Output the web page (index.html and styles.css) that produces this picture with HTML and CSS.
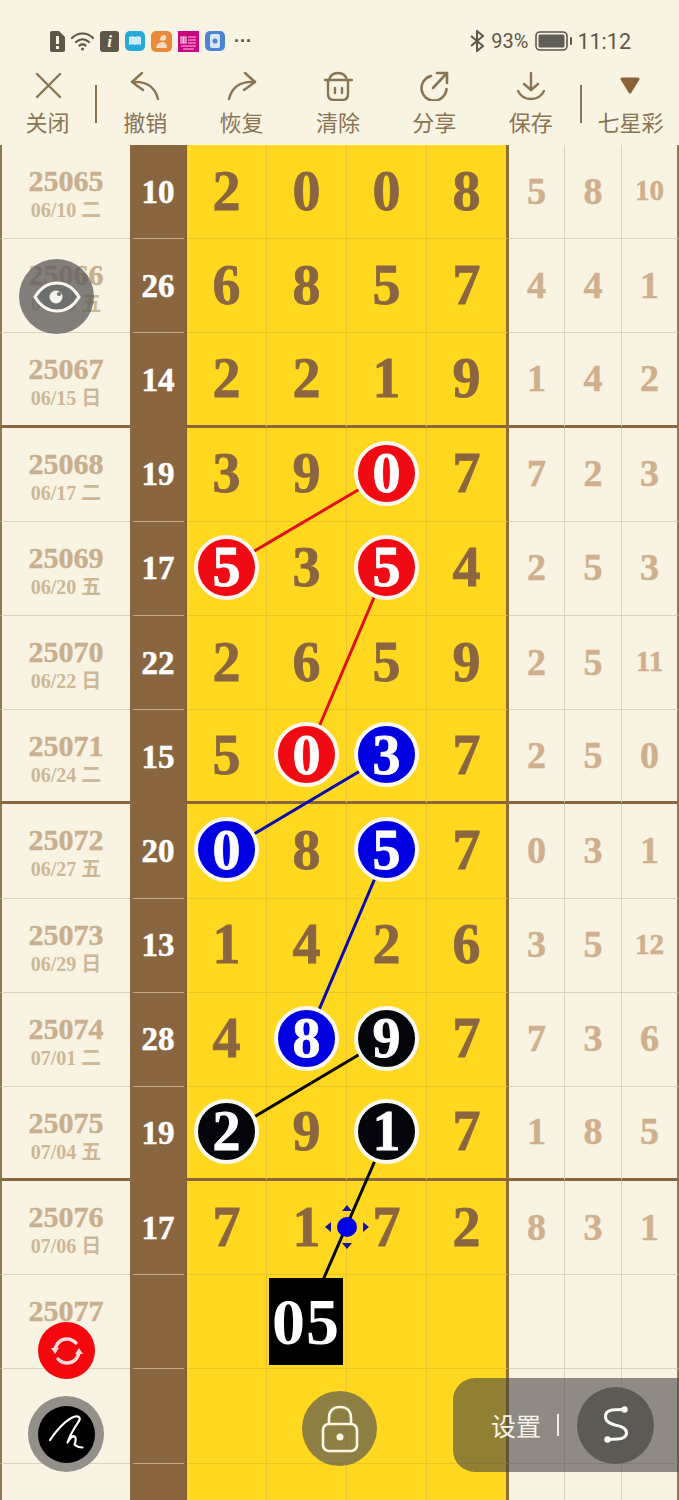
FILE: index.html
```html
<!DOCTYPE html>
<html lang="zh-CN">
<head>
  <meta charset="UTF-8">
  <meta name="viewport" content="width=device-width, initial-scale=1.0">
  <title>七星彩</title>
  <link rel="stylesheet" href="styles.css">
</head>
<body>
  <!-- Status bar -->
  <div class="status-bar">
    <div class="status-left">
      <svg class="ico" width="16" height="21" viewBox="0 0 16 21"><path d="M3 0h7l6 6v13a2 2 0 0 1-2 2H3a2 2 0 0 1-2-2V2a2 2 0 0 1 2-2z" fill="#5f564a"/><rect x="7" y="5" width="3" height="8" fill="#f9f3e3"/><rect x="7" y="15" width="3" height="3" fill="#f9f3e3"/></svg>
      <svg class="ico" width="23" height="21" viewBox="0 0 23 21" fill="none" stroke="#5f564a" stroke-width="2.2" stroke-linecap="round"><path d="M1 7c6-6 15-6 21 0"/><path d="M5 11c4-3.500 9-3.500 13 0"/><path d="M8.500 14.500c2-1.500 4-1.500 6 0"/><circle cx="11.500" cy="18" r="1.500" fill="#5f564a" stroke="none"/></svg>
      <span class="tile tile-i">i</span>
      <svg class="ico" width="20" height="20" viewBox="0 0 20 20"><rect width="20" height="20" rx="5" fill="#27a9da"/><path d="M4 6c2-1 4-1 6 0 2-1 4-1 6 0v8c-2-1-4-1-6 0-2-1-4-1-6 0z" fill="#cdeef8"/></svg>
      <svg class="ico" width="21" height="21" viewBox="0 0 21 21"><rect width="21" height="21" rx="5" fill="#e98a3a"/><path d="M5 17c1-4 3-6 6-6 3 0 5 2 5 6zM9 9c0-3 2-5 4-5s3 2 2 4-4 2-6 1z" fill="#f8dcc0"/></svg>
      <svg class="ico" width="21" height="21" viewBox="0 0 21 21"><rect width="21" height="21" fill="#c9067f"/><path d="M3 6h2v6H3zM6 6h2v6H6zM10 6h8M10 9h8M10 12h8M3 15h15M5 18h11" stroke="#f6c8e2" stroke-width="1.200" fill="none"/></svg>
      <svg class="ico" width="20" height="20" viewBox="0 0 20 20"><rect width="20" height="20" rx="5" fill="#4c86d2"/><rect x="5" y="3" width="10" height="14" rx="2" fill="#d8e6f6"/><circle cx="10" cy="10" r="2.500" fill="#4c86d2"/></svg>
      <span class="more">···</span>
    </div>
    <div class="status-right">
      <svg class="ico" width="16" height="22" viewBox="0 0 16 22" fill="none" stroke="#5f564a" stroke-width="2"><path d="M2 6l12 10-6 5V1l6 5L2 16"/></svg>
      <span class="pct">93%</span>
      <svg class="ico" width="38" height="20" viewBox="0 0 38 20"><rect x="1" y="1" width="31" height="18" rx="4" fill="none" stroke="#5f564a" stroke-width="1.600"/><rect x="3.500" y="3.500" width="26" height="13" rx="1.500" fill="#5f5f58"/><rect x="35" y="6" width="2" height="8" rx="1" fill="#5f564a"/></svg>
      <span class="clock">11:12</span>
    </div>
  </div>

  <!-- Toolbar -->
  <div class="toolbar">
    <div class="tool first">
      <svg width="30" height="30" viewBox="0 0 30 30" fill="none" stroke="#8a7456" stroke-width="2.400" stroke-linecap="round"><path d="M4 3l23 23M27 3L4 26"/></svg>
      <span>关闭</span>
    </div>
    <div class="tool-sep"></div>
    <div class="tool">
      <svg width="32" height="30" viewBox="0 0 32 30" fill="none" stroke="#8a7456" stroke-width="2.400" stroke-linecap="round" stroke-linejoin="round"><path d="M13 2L3 11l11 8"/><path d="M3 11c14-1 23 5 26 17"/></svg>
      <span>撤销</span>
    </div>
    <div class="tool">
      <svg width="32" height="30" viewBox="0 0 32 30" fill="none" stroke="#8a7456" stroke-width="2.400" stroke-linecap="round" stroke-linejoin="round"><path d="M19 2l10 9-11 8"/><path d="M29 11C15 10 6 16 3 28"/></svg>
      <span>恢复</span>
    </div>
    <div class="tool">
      <svg width="30" height="30" viewBox="0 0 30 30" fill="none" stroke="#8a7456" stroke-width="2.400" stroke-linecap="round"><path d="M6 9C7 4.500 10 2 15 2s8 2.500 9 7"/><path d="M2 9h27"/><path d="M5 9v14c0 4 2 6 6 6h8c4 0 6-2 6-6V9"/><path d="M12 17v5M19 17v5"/></svg>
      <span>清除</span>
    </div>
    <div class="tool">
      <svg width="30" height="30" viewBox="0 0 30 30" fill="none" stroke="#8a7456" stroke-width="2.600" stroke-linecap="round" stroke-linejoin="round"><path d="M12 5A12.500 12.500 0 1 0 27.500 18"/><path d="M14 17L27 3"/><path d="M18 2h10v10"/></svg>
      <span>分享</span>
    </div>
    <div class="tool">
      <svg width="30" height="30" viewBox="0 0 30 30" fill="none" stroke="#8a7456" stroke-width="2.400" stroke-linecap="round" stroke-linejoin="round"><path d="M15 2v17"/><path d="M8 13l7 6 7-6"/><path d="M2 20c3 6 8 8 13 8s10-2 13-8"/></svg>
      <span>保存</span>
    </div>
    <div class="tool-sep last"></div>
    <div class="tool lottery">
      <svg width="30" height="30" viewBox="0 0 30 30"><path d="M7 8h16l-8 13z" fill="#8a6238" stroke="#8a6238" stroke-width="3" stroke-linejoin="round"/></svg>
      <span>七星彩</span>
    </div>
  </div>

  <!-- Chart -->
  <div class="chart">
    <div class="row"><div class="issue"><b>25065</b><i>06/10 二</i></div><div class="sum"><span>10</span></div><div class="num">2</div><div class="num">0</div><div class="num">0</div><div class="num end">8</div><div class="side">5</div><div class="side">8</div><div class="side wide">10</div></div>
    <div class="row"><div class="issue"><b>25066</b><i>06/13 五</i></div><div class="sum"><span>26</span></div><div class="num">6</div><div class="num">8</div><div class="num">5</div><div class="num end">7</div><div class="side">4</div><div class="side">4</div><div class="side">1</div></div>
    <div class="row heavy"><div class="issue"><b>25067</b><i>06/15 日</i></div><div class="sum"><span>14</span></div><div class="num">2</div><div class="num">2</div><div class="num">1</div><div class="num end">9</div><div class="side">1</div><div class="side">4</div><div class="side">2</div></div>
    <div class="row"><div class="issue"><b>25068</b><i>06/17 二</i></div><div class="sum"><span>19</span></div><div class="num">3</div><div class="num">9</div><div class="num"><span class="ball red">0</span></div><div class="num end">7</div><div class="side">7</div><div class="side">2</div><div class="side">3</div></div>
    <div class="row"><div class="issue"><b>25069</b><i>06/20 五</i></div><div class="sum"><span>17</span></div><div class="num"><span class="ball red">5</span></div><div class="num">3</div><div class="num"><span class="ball red">5</span></div><div class="num end">4</div><div class="side">2</div><div class="side">5</div><div class="side">3</div></div>
    <div class="row"><div class="issue"><b>25070</b><i>06/22 日</i></div><div class="sum"><span>22</span></div><div class="num">2</div><div class="num">6</div><div class="num">5</div><div class="num end">9</div><div class="side">2</div><div class="side">5</div><div class="side wide">11</div></div>
    <div class="row heavy"><div class="issue"><b>25071</b><i>06/24 二</i></div><div class="sum"><span>15</span></div><div class="num">5</div><div class="num"><span class="ball red">0</span></div><div class="num"><span class="ball blue">3</span></div><div class="num end">7</div><div class="side">2</div><div class="side">5</div><div class="side">0</div></div>
    <div class="row"><div class="issue"><b>25072</b><i>06/27 五</i></div><div class="sum"><span>20</span></div><div class="num"><span class="ball blue">0</span></div><div class="num">8</div><div class="num"><span class="ball blue">5</span></div><div class="num end">7</div><div class="side">0</div><div class="side">3</div><div class="side">1</div></div>
    <div class="row"><div class="issue"><b>25073</b><i>06/29 日</i></div><div class="sum"><span>13</span></div><div class="num">1</div><div class="num">4</div><div class="num">2</div><div class="num end">6</div><div class="side">3</div><div class="side">5</div><div class="side wide">12</div></div>
    <div class="row"><div class="issue"><b>25074</b><i>07/01 二</i></div><div class="sum"><span>28</span></div><div class="num">4</div><div class="num"><span class="ball blue">8</span></div><div class="num"><span class="ball black">9</span></div><div class="num end">7</div><div class="side">7</div><div class="side">3</div><div class="side">6</div></div>
    <div class="row heavy"><div class="issue"><b>25075</b><i>07/04 五</i></div><div class="sum"><span>19</span></div><div class="num"><span class="ball black">2</span></div><div class="num">9</div><div class="num"><span class="ball black">1</span></div><div class="num end">7</div><div class="side">1</div><div class="side">8</div><div class="side">5</div></div>
    <div class="row"><div class="issue"><b>25076</b><i>07/06 日</i></div><div class="sum"><span>17</span></div><div class="num">7</div><div class="num">1</div><div class="num">7</div><div class="num end">2</div><div class="side">8</div><div class="side">3</div><div class="side">1</div></div>
    <div class="row"><div class="issue"><b>25077</b></div><div class="sum"></div><div class="num"></div><div class="num"></div><div class="num"></div><div class="num end"></div><div class="side"></div><div class="side"></div><div class="side"></div></div>
    <div class="row"><div class="issue"></div><div class="sum"></div><div class="num"></div><div class="num"></div><div class="num"></div><div class="num end"></div><div class="side"></div><div class="side"></div><div class="side"></div></div>
    <div class="row"><div class="issue"></div><div class="sum"></div><div class="num"></div><div class="num"></div><div class="num"></div><div class="num end"></div><div class="side"></div><div class="side"></div><div class="side"></div></div>

    <!-- Connecting lines, coordinates are chart relative -->
    <svg class="links" width="679" height="1355" viewBox="0 0 679 1355" fill="none" stroke-width="3">
      <path d="M387 328L227 422M387 422L307 610" stroke="#e0101c"/>
      <path d="M387 610L227 705M387 705L307 893" stroke="#0a0ab0"/>
      <path d="M387 893L227 988M387 988L323 1135" stroke="#08080c"/>
      <g fill="#0000e6">
        <circle cx="347" cy="1082" r="10"/>
        <path d="M347 1060l5 6h-10zM347 1104l5-6h-10zM325 1082l6-5v10zM369 1082l-6-5v10z" fill="#14149c"/>
      </g>
    </svg>

    <div class="draft">05</div>
  </div>

  <!-- Floating buttons -->
  <div class="float eye">
    <svg width="48" height="32" viewBox="0 0 48 32" fill="none" stroke="#f9f6ee" stroke-width="3"><path d="M2 16C8 6 15 2 24 2s16 4 22 14c-6 10-13 14-22 14S8 26 2 16z" fill="#6e7070"/><circle cx="23" cy="16" r="6.500" fill="#f3f1ea" stroke="none"/><circle cx="26" cy="13" r="2" fill="#6e7070" stroke="none"/></svg>
  </div>
  <div class="float sync">
    <svg width="34" height="30" viewBox="0 0 34 30" fill="none" stroke="#fbdada" stroke-width="3.400" stroke-linecap="round"><path d="M5 14C6 7 11 3 17 3c4 0 7 2 9 4"/><path d="M29 16c-1 7-6 11-12 11-4 0-7-2-9-4"/><path d="M1 12h8l-4 6zM33 18h-8l4-6z" fill="#fbdada" stroke="none"/></svg>
  </div>
  <div class="float sign">
    <div class="sign-inner">
      <svg width="40" height="42" viewBox="0 0 40 42" fill="none" stroke="#fff" stroke-width="2.200" stroke-linecap="round" stroke-linejoin="round"><path d="M4 27C9 19 20 6 29 3.500c5-1 6 2 3 6-4 6-8 13-10.500 20 2-4 5-7 7-6 2 1 1 6 0 8 2 2 5 3 8 3"/></svg>
    </div>
  </div>
  <div class="float lock">
    <svg width="38" height="48" viewBox="0 0 38 48" fill="none" stroke="#fbf6e6" stroke-width="2.600"><path d="M8 20v-7C8 6 12 2 19 2s11 4 11 11v7"/><rect x="2" y="19" width="34" height="27" rx="6"/><circle cx="19" cy="32" r="3.500" fill="#fbf6e6" stroke="none"/></svg>
  </div>
  <div class="float settings">
    <span class="settings-label">设置</span>
    <span class="settings-sep"></span>
    <div class="settings-btn">
      <svg width="30" height="40" viewBox="0 0 30 40" fill="none" stroke="#fbfaf5" stroke-width="3" stroke-linecap="round"><path d="M23 4.500C18 4.500 14 4.500 11 5 6 6 4 9 4.500 12.500 5 17 10 19 14 20c6 1 11.500 3 11.500 8 0 4-4.500 6-8.500 6l-10 .5"/><circle cx="23.500" cy="4.500" r="3.200" fill="#fbfaf5" stroke="none"/><circle cx="6.500" cy="34.500" r="3.200" fill="#fbfaf5" stroke="none"/></svg>
    </div>
  </div>
</body>
</html>
```

FILE: styles.css
```css
html, body {
  margin: 0;
  height: 1500px;
  overflow: hidden;
}

body {
  position: relative;
  background-color: #f9f3e3;
  font-family: "Noto Sans CJK SC", "Noto Sans", sans-serif;
}

.ico {
  display: block;
  flex: none;
}

/* Status bar */
.status-bar {
  height: 60px;
  padding: 22px 48px 0 49px;
  box-sizing: border-box;
  display: flex;
  align-items: center;
  justify-content: space-between;
  color: #5f564a;
}

.status-left, .status-right {
  display: flex;
  align-items: center;
}

.status-left {
  gap: 6px;
}

.tile {
  width: 19px;
  height: 21px;
  border-radius: 3px;
  background: #5f564a;
  color: #f9f3e3;
  font: italic bold 17px/21px "Liberation Serif", serif;
  text-align: center;
}

.more {
  margin-left: 3px;
  font: bold 18px/20px "Liberation Sans", sans-serif;
}

.status-right {
  font-family: Roboto, sans-serif;
  font-size: 20px;
}

.pct {
  margin: 0 7px 0 6px;
}

.clock {
  margin-left: 4px;
  font-size: 21.5px;
}

/* Toolbar */
.toolbar {
  height: 85px;
  display: flex;
  align-items: flex-start;
  color: #8a7456;
}

.tool {
  width: 96.4px;
  display: flex;
  flex-direction: column;
  align-items: center;
  padding-top: 11px;
}

.tool svg {
  display: block;
}

.tool span {
  margin-top: 4px;
  font-size: 22px;
  line-height: 32px;
  white-space: nowrap;
}

.tool.first {
  width: 95px;
}

.tool.lottery {
  width: 97px;
}

.tool-sep {
  width: 2px;
  height: 38px;
  margin-top: 25px;
  background: #8a7456;
}

.tool-sep.last {
  margin-left: 1px;
}

/* Chart */
.chart {
  position: relative;
  overflow: hidden;
}

.row {
  height: 94.2px;
  display: grid;
  grid-template-columns: 130px 57px repeat(3, 80px) 82px 56px 57px 57px;
}

.row > div {
  box-sizing: border-box;
  display: flex;
  align-items: center;
  justify-content: center;
  border-bottom: 1px solid #dcd3bd;
}

.row > .issue {
  flex-direction: column;
  justify-content: flex-start;
  border-left: 2px solid #8c7a50;
  padding-top: 19px;
}

.issue b {
  font: bold 30px/34px "Liberation Serif", serif;
  color: #c8af8f;
  -webkit-text-stroke: 0.4px #c8af8f;
}

.issue i {
  font: bold 20px/24px "Liberation Serif", "Noto Sans CJK SC", serif;
  color: #cdb797;
}

.row > .sum {
  background: #8a6640;
  border-bottom: none;
  position: relative;
  border-right: 1px solid #7f5f30;
}

.sum span {
  font: bold 33px/1 "Liberation Serif", serif;
  color: #fff;
  -webkit-text-stroke: 0.5px #fff;
}

/* thin lighter tick in the sum column */
.sum::after {
  content: "";
  position: absolute;
  left: 3px;
  right: 2px;
  bottom: 0;
  height: 1px;
  background: #c4a684;
}

.row > .num {
  padding-bottom: 2px;
  background: #ffd81f;
  border-right: 1px solid #edc32e;
  border-bottom-color: #edc32e;
  font: bold 56px/1 "Liberation Serif", serif;
  color: #8a6640;
  -webkit-text-stroke: 0.8px #8a6640;
}

.row > .num.end {
  border-right: 3px solid #8f6c38;
}

.row > .side {
  padding-bottom: 2px;
  border-right: 1px solid #dcd3bd;
  font: bold 38px/1 "Liberation Serif", serif;
  color: #cfb08e;
  -webkit-text-stroke: 0.5px #cfb08e;
}

.row > .side:last-child {
  border-right: 2px solid #8c7a50;
}

.row > .side.wide {
  font-size: 29px;
}

/* heavy line every four rows */
.row.heavy > div {
  border-bottom: 3px solid #8a6640;
}

.row.heavy > .sum {
  border-bottom: none;
}

.row.heavy > .sum::after {
  display: none;
}

.ball {
  position: relative;
  z-index: 2;
  width: 65px;
  height: 65px;
  box-sizing: border-box;
  border: 4px solid #fbf8ee;
  border-radius: 50%;
  display: flex;
  align-items: center;
  justify-content: center;
  color: #fff;
  -webkit-text-stroke: 0.8px #fff;
}

.ball.red { background: #f00a14; }
.ball.blue { background: #0000e0; }
.ball.black { background: #05050c; }

.links {
  position: absolute;
  left: 0;
  top: 0;
  z-index: 1;
}

.draft {
  position: absolute;
  left: 269px;
  top: 1133px;
  z-index: 2;
  width: 74px;
  height: 87px;
  background: #000;
  color: #fff;
  font: bold 66px/87px "Liberation Serif", serif;
  letter-spacing: 1px;
  text-align: center;
}

/* Floating buttons */
.float {
  position: absolute;
  z-index: 3;
  display: flex;
  align-items: center;
  justify-content: center;
  border-radius: 50%;
}

.eye {
  left: 19px;
  top: 259px;
  width: 75px;
  height: 75px;
  background: rgba(96, 94, 92, 0.78);
}

.sync {
  left: 38px;
  top: 1322px;
  width: 57px;
  height: 57px;
  background: #f4080e;
}

.sign {
  left: 28px;
  top: 1396px;
  width: 76px;
  height: 76px;
  background: #93908a;
}

.sign-inner {
  width: 57px;
  height: 57px;
  border-radius: 50%;
  background: #000;
  display: flex;
  align-items: center;
  justify-content: center;
}

.lock {
  left: 302px;
  top: 1391px;
  width: 75px;
  height: 75px;
  background: rgba(88, 84, 84, 0.68);
}

.settings {
  left: 453px;
  top: 1378px;
  width: 226px;
  height: 94px;
  box-sizing: border-box;
  border-radius: 22px 0 0 22px;
  padding-left: 38px;
  background: rgba(72, 68, 66, 0.6);
  justify-content: flex-start;
}

.settings-label {
  font-size: 25px;
  line-height: 32px;
  color: #f8f5e8;
}

.settings-sep {
  width: 2px;
  height: 22px;
  margin: 0 18px 0 16px;
  background: #f0ede0;
}

.settings-btn {
  width: 77px;
  height: 77px;
  border-radius: 50%;
  background: #5b5a55;
  display: flex;
  align-items: center;
  justify-content: center;
}
```
